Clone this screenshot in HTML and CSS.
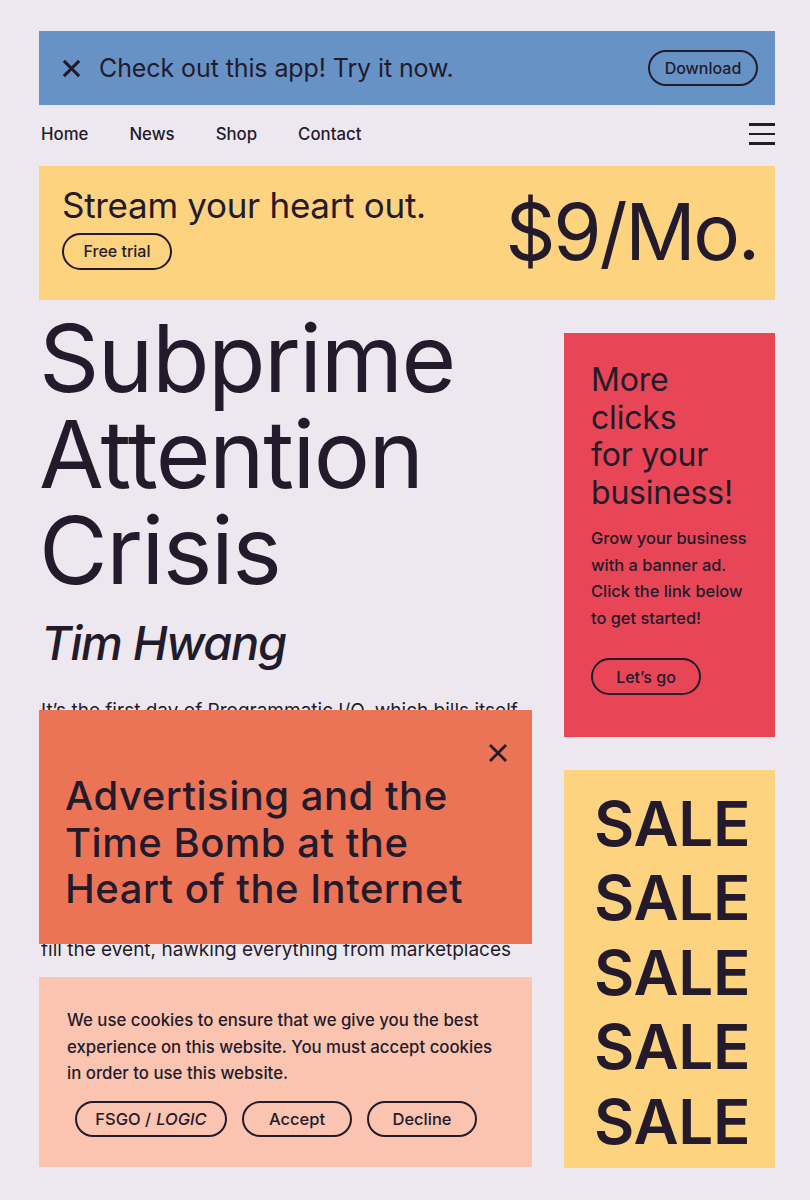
FILE: index.html
```html
<!DOCTYPE html>
<html lang="en">
<head>
<meta charset="utf-8">
<title>Subprime Attention Crisis</title>
<link rel="stylesheet" href="styles.css">
</head>
<body>
<div class="page">
  <div class="promo">
    <div class="promo-left">
      <svg class="promo-x" viewBox="0 0 22 22" width="21" height="21"><path d="M3 3 L19 19 M19 3 L3 19" stroke="#231b2b" stroke-width="3.2" fill="none"/></svg>
      <span class="promo-text">Check out this app! Try it now.</span>
    </div>
    <a class="pill pill-download">Download</a>
  </div>

  <nav class="nav">
    <ul class="nav-links">
      <li>Home</li>
      <li>News</li>
      <li>Shop</li>
      <li>Contact</li>
    </ul>
    <div class="burger"><span></span><span></span><span></span></div>
  </nav>

  <div class="stream">
    <div class="stream-left">
      <div class="stream-title">Stream your heart out.</div>
      <a class="pill pill-trial">Free trial</a>
    </div>
    <div class="stream-price">$9/Mo.</div>
  </div>

  <div class="content">
    <div class="main">
      <h1 class="title">Subprime Attention Crisis</h1>
      <div class="author">Tim Hwang</div>
      <div class="article">
        <p class="article-text">It’s the first day of Programmatic I/O, which bills itself<br>as the leading conference for programmatic marketing<br>and advertising. I’m standing in a cavernous hall in<br>San Francisco, surrounded by marketers, ad buyers<br>and software vendors who have flown in from around<br>the world. A river of attendees moves between the<br>displays, swapping business cards and pitches, while<br>the hum of a thousand conversations fills the air.<br>Rows upon rows of brightly lit vendor booths<br>fill the event, hawking everything from marketplaces</p>
        <div class="overlay">
          <svg class="overlay-x" viewBox="0 0 20 20" width="20" height="20"><path d="M2 2 L18 18 M18 2 L2 18" stroke="#231b2b" stroke-width="2.8" fill="none"/></svg>
          <div class="overlay-title">Advertising and the<br>Time Bomb at the<br>Heart of the Internet</div>
        </div>
      </div>
      <div class="cookies">
        <p class="cookies-text">We use cookies to ensure that we give you the best experience on this website. You must accept cookies in order to use this website.</p>
        <div class="cookies-actions">
          <a class="pill pill-cookie pill-fsgo">FSGO / <em>LOGIC</em></a>
          <a class="pill pill-cookie pill-accept">Accept</a>
          <a class="pill pill-cookie pill-decline">Decline</a>
        </div>
      </div>
    </div>

    <aside class="side">
      <div class="ad-red">
        <div class="ad-red-title">More<br>clicks<br>for your<br>business!</div>
        <p class="ad-red-text">Grow your business with a banner ad. Click the link below to get started!</p>
        <a class="pill pill-go">Let’s go</a>
      </div>
      <div class="ad-sale">
        <div class="sale">SALE</div>
        <div class="sale">SALE</div>
        <div class="sale">SALE</div>
        <div class="sale">SALE</div>
        <div class="sale">SALE</div>
      </div>
    </aside>
  </div>
</div>
</body>
</html>
```

FILE: styles.css
```css
* { box-sizing: border-box; }
html, body { margin: 0; padding: 0; }
body {
  background: #ede8f0;
  color: #231b2b;
  font-family: "Inter", "Noto Sans", sans-serif;
}
.page {
  width: 736px;
  margin-left: 39px;
  padding-top: 31px;
}
.pill {
  display: inline-flex;
  align-items: center;
  justify-content: center;
  border: 2px solid #231b2b;
  border-radius: 999px;
  color: #231b2b;
  text-decoration: none;
  font-weight: 550;
}

/* promo bar */
.promo {
  background: #6792c5;
  height: 74px;
  display: flex;
  align-items: center;
  justify-content: space-between;
  padding: 0 17px 0 22px;
}
.promo-left { display: flex; align-items: center; gap: 17px; }
.promo-x { display: block; }
.promo-text { font-size: 25px; font-weight: 400; letter-spacing: -0.1px; }
.pill-download { width: 110px; height: 36px; font-size: 16px; }

/* nav */
.nav {
  height: 61px;
  display: flex;
  align-items: center;
  justify-content: space-between;
  padding: 0 0 3px 2px;
}
.nav-links {
  list-style: none;
  margin: 0;
  padding: 0;
  display: flex;
  gap: 41px;
  font-size: 16.8px;
  font-weight: 550;
}
.burger { width: 26px; display: flex; flex-direction: column; gap: 7px; }
.burger span { display: block; height: 2.5px; background: #231b2b; }

/* stream */
.stream {
  background: #fed37f;
  height: 134px;
  display: flex;
  align-items: center;
  justify-content: space-between;
  padding: 0 17px 0 23px;
}
.stream-left { display: flex; flex-direction: column; align-items: flex-start; gap: 8px; padding-bottom: 12px; }
.stream-title { font-size: 35px; line-height: 40px; font-weight: 400; letter-spacing: -0.3px; }
.pill-trial { width: 110px; height: 37px; font-size: 16px; }
.stream-price { font-size: 78px; line-height: 80px; font-weight: 400; letter-spacing: -2.3px; padding-bottom: 2px; }

/* content */
.content {
  display: grid;
  grid-template-columns: 493px 211px;
  column-gap: 32px;
  align-items: start;
}
.main { display: flex; flex-direction: column; }
.title {
  margin: 10px 0 0 0;
  font-size: 94px;
  line-height: 96px;
  font-weight: 400;
  letter-spacing: -1.5px;
}
.author {
  margin: 16px 0 0 2px;
  font-size: 47px;
  line-height: 58px;
  font-style: italic;
  font-weight: 500;
  letter-spacing: -1.3px;
}
.article { position: relative; margin-top: 26px; }
.article-text {
  margin: 0 0 0 2px;
  font-size: 19px;
  line-height: 26.6px;
  height: 262px;
  overflow: hidden;
  white-space: nowrap;
}
.overlay {
  position: absolute;
  left: 0;
  right: 0;
  top: 12px;
  height: 234px;
  background: #ec7456;
  padding: 63px 20px 0 26px;
}
.overlay-x { position: absolute; right: 24px; top: 33px; }
.overlay-title { font-size: 40px; line-height: 46.5px; font-weight: 500; letter-spacing: 0.5px; }

.cookies {
  margin-top: 17px;
  background: #fbc4b1;
  height: 190px;
  padding: 30px 30px 0 28px;
}
.cookies-text { margin: 0; font-size: 16.8px; line-height: 26.5px; font-weight: 550; }
.cookies-actions { display: flex; gap: 15px; margin: 14px 0 0 8px; }
.pill-cookie { height: 36px; font-size: 16.5px; }
.pill-fsgo { width: 152px; }
.pill-fsgo em { font-style: italic; margin-left: 5px; }
.pill-accept { width: 110px; }
.pill-decline { width: 110px; }

/* side */
.side { display: flex; flex-direction: column; gap: 33px; margin-top: 33px; }
.ad-red {
  background: #e84656;
  height: 404px;
  padding: 28px 16px 0 27px;
}
.ad-red-title { font-size: 32px; line-height: 37.5px; font-weight: 400; letter-spacing: -0.2px; }
.ad-red-text { margin: 14px 0 0 0; font-size: 16.4px; line-height: 26.5px; font-weight: 550; }
.pill-go { width: 110px; height: 37px; font-size: 16px; margin-top: 27px; }
.ad-sale {
  background: #fed37f;
  height: 398px;
  padding: 17px 0 0 30px;
}
.sale { font-size: 62px; line-height: 74.4px; font-weight: 600; letter-spacing: -0.3px; }
```
